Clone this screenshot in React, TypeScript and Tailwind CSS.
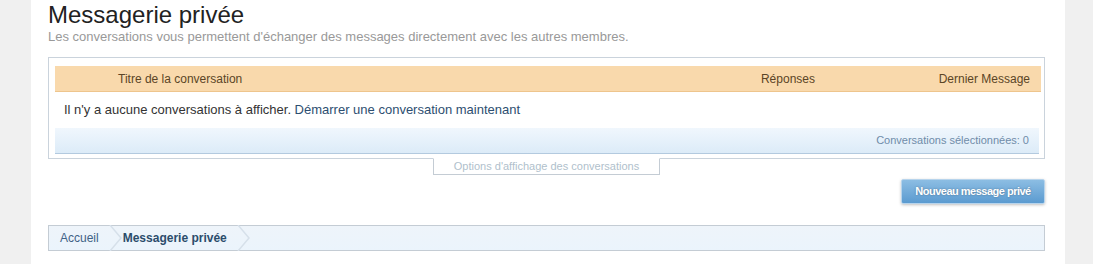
import { ReactNode } from "react";

const Crumb = ({ children, bold }: { children: ReactNode; bold?: boolean }) => (
    <li className="flex items-center h-full">
        <span className={bold ? "font-bold text-[#2b4c6b]" : "text-[#3f6286]"}>{children}</span>
        <svg width="14" height="26" viewBox="0 0 14 26" className="ml-[10px]">
            <path d="M1 0 L12 13 L1 26" fill="none" stroke="#d6e0ea" strokeWidth="1.5" />
        </svg>
    </li>
);

const App = () => {
    return (
        <div className="w-[1093px] h-[264px] bg-[#f0f0f0] flex font-['Liberation_Sans',Arial,sans-serif]">
            <div className="ml-[31px] w-[1034px] h-full bg-white pl-[17px] pr-[20px]">
                <h1 className="text-[24px] leading-[28px] pt-[1px] text-[#222]">Messagerie privée</h1>
                <p className="text-[13px] leading-[16px] text-[#999]">
                    Les conversations vous permettent d&apos;échanger des messages directement avec les autres membres.
                </p>

                <div className="mt-[12px]">
                    <div className="border border-[#cad3dc] pt-[8px] pl-[6px] pr-[3px] pb-[4px]">
                        <div className="h-[26px] flex items-center bg-[#f9d9ac] border-b border-[#eec58d] text-[12px] text-[#5b4526]">
                            <span className="ml-[63px] flex-1">Titre de la conversation</span>
                            <span className="w-[60px] text-right">Réponses</span>
                            <span className="w-[226px] text-right pr-[11px]">Dernier Message</span>
                        </div>
                        <div className="h-[36px] flex items-center pl-[9px] text-[13px] text-[#333]">
                            Il n&apos;y a aucune conversations à afficher.&nbsp;
                            <span className="text-[#2d4e70]">Démarrer une conversation maintenant</span>
                        </div>
                        <div className="h-[26px] mr-[2px] flex items-center justify-end pr-[10px] bg-gradient-to-b from-[#f0f7fd] to-[#dcebf8] border-b border-[#b3cadf] text-[11px] text-[#6f8ca9]">
                            Conversations sélectionnées: 0
                        </div>
                    </div>
                    <div className="flex justify-center -mt-px">
                        <div className="w-[227px] h-[17px] border border-[#c4ccd4] border-t-white bg-white flex items-center justify-center text-[11px] text-[#b0bfcc]">
                            Options d&apos;affichage des conversations
                        </div>
                    </div>
                </div>

                <div className="flex justify-end mt-[4px]">
                    <button className="w-[144px] h-[25px] rounded-[2px] border border-[#b7d4ec] bg-gradient-to-b from-[#8cbde3] to-[#5b9bd0] shadow-[0_1px_3px_rgba(0,0,0,0.25)] text-[11px] font-bold tracking-[-0.5px] text-white [text-shadow:0_0_2px_rgba(0,0,0,0.35)]">
                        Nouveau message privé
                    </button>
                </div>

                <nav className="mt-[21px] h-[26px] border border-[#c4ccd4] bg-gradient-to-b from-[#eef4fa] to-[#ebf4fc] text-[12px]">
                    <ul className="flex h-full pl-[11px]">
                        <Crumb>Accueil</Crumb>
                        <Crumb bold>Messagerie privée</Crumb>
                    </ul>
                </nav>
            </div>
        </div>
    );
};

export default App;
